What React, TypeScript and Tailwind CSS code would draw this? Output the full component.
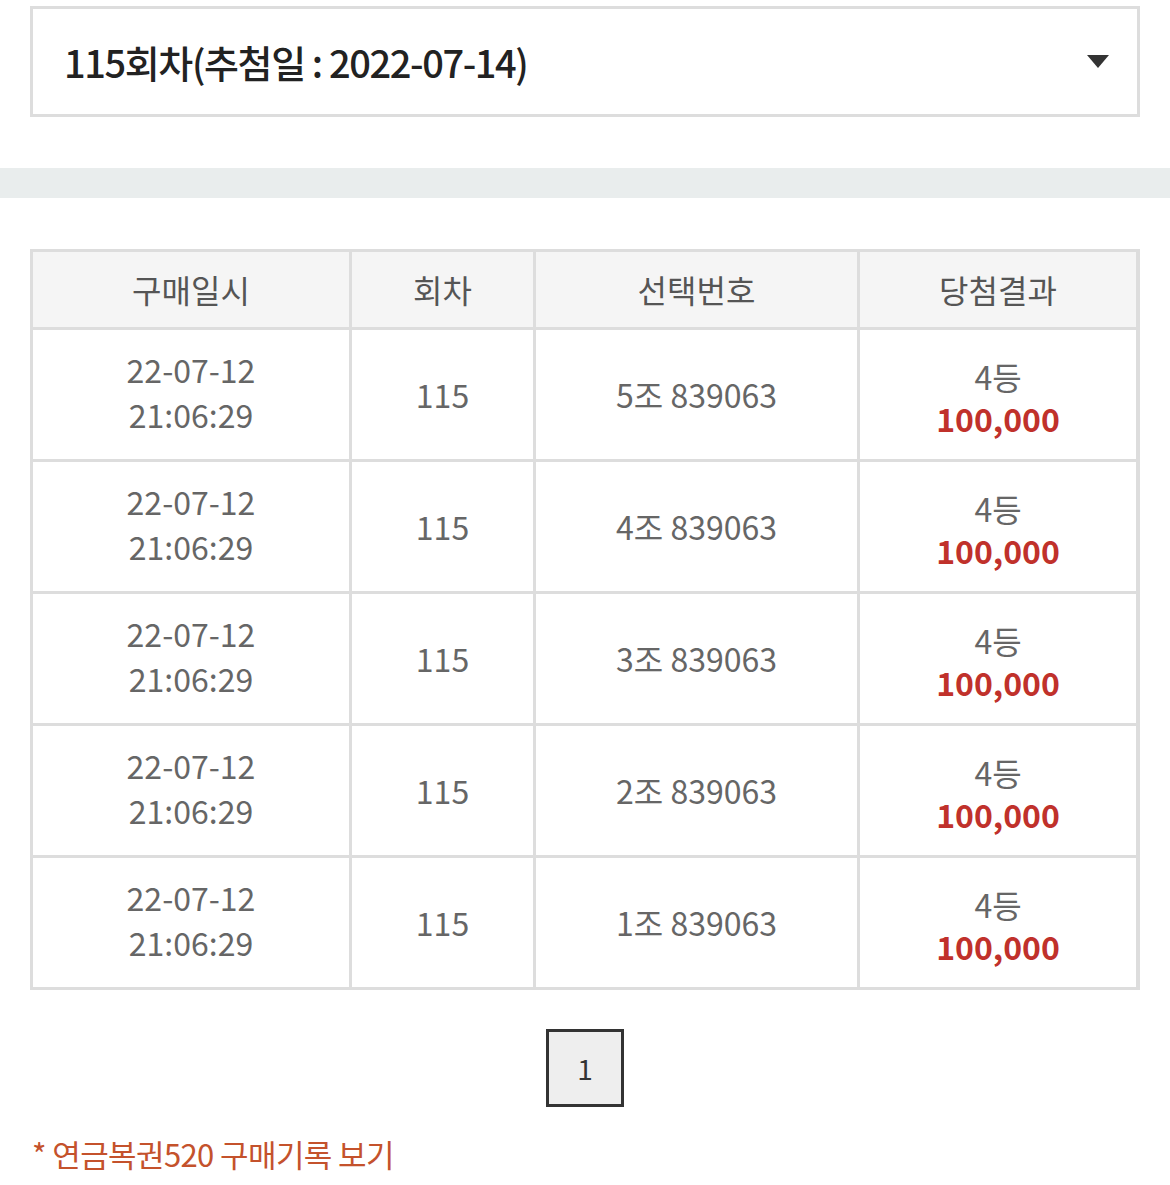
import React from "react";

const rows = [
  { date: "22-07-12", time: "21:06:29", round: "115", pick: "5조 839063", rank: "4등", prize: "100,000" },
  { date: "22-07-12", time: "21:06:29", round: "115", pick: "4조 839063", rank: "4등", prize: "100,000" },
  { date: "22-07-12", time: "21:06:29", round: "115", pick: "3조 839063", rank: "4등", prize: "100,000" },
  { date: "22-07-12", time: "21:06:29", round: "115", pick: "2조 839063", rank: "4등", prize: "100,000" },
  { date: "22-07-12", time: "21:06:29", round: "115", pick: "1조 839063", rank: "4등", prize: "100,000" },
];

const headers = ["구매일시", "회차", "선택번호", "당첨결과"];

export default function App() {
  return (
    <div
      className="min-h-[1185px] w-[1170px] bg-white pt-[6px]"
      style={{ fontFamily: '"Noto Sans CJK KR", "Noto Sans", sans-serif' }}
    >
      {/* round selector */}
      <div className="mx-[30px] flex h-[111px] items-center justify-between border-[3px] border-[#dddddd] pl-[31px] pr-[28px]">
        <span className="text-[38px] font-medium tracking-[-1.4px] text-[#222]">115회차(추첨일 : 2022-07-14)</span>
        <svg width="22" height="13" viewBox="0 0 22 13">
          <path d="M0 0 L22 0 L11 13 Z" fill="#333" />
        </svg>
      </div>

      <div className="mt-[51px] h-[30px] bg-[#e9eded]" />

      {/* purchase history table */}
      <div className="mx-[30px] mt-[51px] grid grid-cols-[316px_181px_321px_276px] gap-[3px] bg-[#dddddd] p-[3px]">
        {headers.map((h) => (
          <div key={h} className="flex h-[75px] items-center justify-center bg-[#f5f5f5] pb-[2px] text-[32px] text-[#555]">
            {h}
          </div>
        ))}
        {rows.map((r, i) => (
          <React.Fragment key={i}>
            <div className="flex h-[129px] flex-col items-center justify-center bg-white pb-[6px] text-[32px] leading-[45px] text-[#666]">
              <span>{r.date}</span>
              <span>{r.time}</span>
            </div>
            <div className="flex h-[129px] items-center justify-center bg-white pb-[2px] text-[32px] text-[#666]">{r.round}</div>
            <div className="flex h-[129px] items-center justify-center bg-white pb-[2px] text-[32px] text-[#666]">{r.pick}</div>
            <div className="flex h-[129px] flex-col items-center justify-center bg-white pt-[4px] text-[32px] leading-[42px]">
              <span className="text-[#666]">{r.rank}</span>
              <span className="font-bold text-[#c0312b]">{r.prize}</span>
            </div>
          </React.Fragment>
        ))}
      </div>

      {/* pagination */}
      <div className="mt-[39px] flex justify-center">
        <div className="flex h-[78px] w-[78px] items-center justify-center border-[3px] border-[#333] bg-[#eeeeee] text-[28px] text-[#333]">
          1
        </div>
      </div>

      <div className="mt-[24px] pl-[32px] text-[31px] tracking-[-0.6px] text-[#c4522c]">* 연금복권520 구매기록 보기</div>
    </div>
  );
}
